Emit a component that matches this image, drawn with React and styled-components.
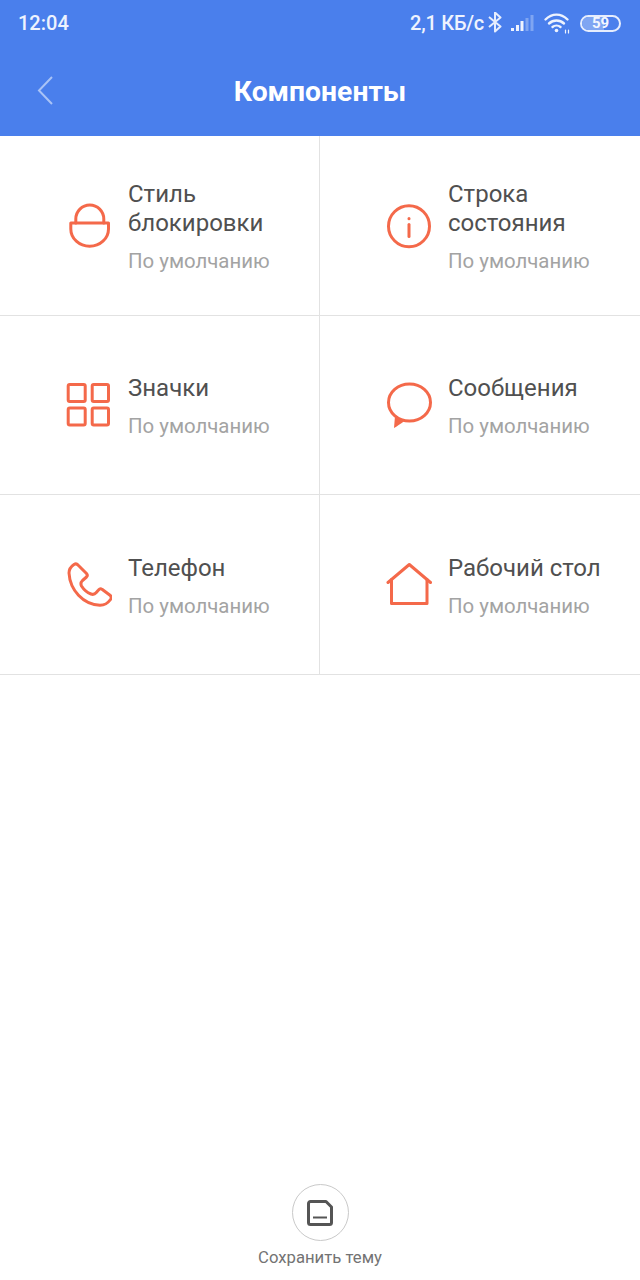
import React from "react";
import styled, { createGlobalStyle } from "styled-components";

const GlobalStyle = createGlobalStyle`
  html, body {
    margin: 0;
    padding: 0;
    background: #fff;
    font-family: Roboto, "Liberation Sans", sans-serif;
  }
`;

const Page = styled.div`
  width: 640px;
  height: 1280px;
  display: flex;
  flex-direction: column;
  overflow: hidden;
  background: #fff;
`;

const Header = styled.header`
  background: #4a7fec;
  height: 136px;
  display: flex;
  flex-direction: column;
  color: #fff;
`;

const StatusBar = styled.div`
  height: 46px;
  display: flex;
  align-items: center;
  justify-content: space-between;
  padding: 0 19px 0 18px;
  font-size: 20px;
  font-weight: 500;
  color: #eef3fe;
`;

const StatusRight = styled.div`
  display: flex;
  align-items: center;
`;

const Speed = styled.span`
  margin-right: 4px;
  letter-spacing: -0.25px;
`;

const StatusIcon = styled.svg`
  display: block;
  margin-left: ${({ $gap }) => $gap || 0}px;
`;

const Battery = styled.div`
  position: relative;
  width: 41px;
  height: 17px;
  margin-left: 9px;
  box-sizing: border-box;
  border: 2px solid #e6edfd;
  border-radius: 9px;
  display: flex;
  align-items: center;
  justify-content: center;
  overflow: hidden;
  font-size: 15px;
  line-height: 13px;
  font-weight: 700;
  color: #f2f6ff;
`;

const BatteryFill = styled.div`
  position: absolute;
  left: 0;
  top: 0;
  bottom: 0;
  background: #7fa5f2;
`;

const BatteryLabel = styled.span`
  position: relative;
`;

const NavBar = styled.div`
  flex: 1;
  position: relative;
  display: flex;
  align-items: center;
  justify-content: center;
`;

const BackButton = styled.div`
  position: absolute;
  left: 36px;
  top: 29px;
  line-height: 0;
`;

const Title = styled.h1`
  margin: 2px 0 0;
  font-size: 28.3px;
  font-weight: 700;
  line-height: 32px;
`;

const Grid = styled.div`
  display: grid;
  grid-template-columns: 320px 320px;
  grid-template-rows: 180px 179px 180px;
`;

const Cell = styled.div`
  box-sizing: border-box;
  display: flex;
  align-items: center;
  gap: 16px;
  padding-left: 64px;
  border-bottom: 1px solid #e2e2e2;
  border-right: ${({ $divider }) => ($divider ? "1px solid #e2e2e2" : "none")};
`;

const IconBox = styled.div`
  width: 48px;
  height: 48px;
  flex: none;
  line-height: 0;
`;

const CellText = styled.div`
  display: flex;
  flex-direction: column;
  margin-top: 5px;
`;

const CellTitle = styled.div`
  font-size: 24px;
  line-height: 29px;
  color: #505050;
  white-space: pre-line;
`;

const CellSub = styled.div`
  margin-top: 9px;
  font-size: 20.4px;
  line-height: 29px;
  color: #a3a3a3;
`;

const Footer = styled.footer`
  margin-top: auto;
  padding-bottom: 11px;
  display: flex;
  flex-direction: column;
  align-items: center;
`;

const SaveCircle = styled.div`
  width: 57px;
  height: 57px;
  box-sizing: border-box;
  border: 1px solid #c9c9c9;
  border-radius: 50%;
  display: flex;
  align-items: center;
  justify-content: center;
`;

const SaveLabel = styled.div`
  margin-top: 6px;
  font-size: 16.7px;
  line-height: 22px;
  color: #737373;
`;

const Line = styled.svg.attrs({
  width: 48,
  height: 48,
  viewBox: "0 0 48 48",
  fill: "none",
  stroke: "#f4694a",
  strokeWidth: 3,
  strokeLinecap: "round",
  strokeLinejoin: "round",
})``;

const LockIcon = () => (
  <Line>
    <path d="M11.800 21V17a14 14 0 0 1 28 0V21" />
    <path d="M6.800 21H44.500V27a18.850 17.300 0 0 1-37.700 0z" />
  </Line>
);

const InfoIcon = () => (
  <Line>
    <circle cx="25" cy="24.3" r="20.5" />
    <path d="M25 22.5v12" />
    <path d="M25 16.5v.3" />
  </Line>
);

const GridIcon = () => (
  <Line>
    <rect x="4.2" y="3.5" width="17" height="17" rx="1.5" />
    <rect x="28.2" y="3.5" width="16.3" height="17" rx="1.5" />
    <rect x="4.2" y="27" width="17" height="17" rx="1.5" />
    <rect x="28.2" y="27" width="16.3" height="17" rx="1.5" />
  </Line>
);

const BubbleIcon = () => (
  <Line>
    <ellipse cx="25.5" cy="21.5" rx="21" ry="18.5" />
    <path d="M11 35L10 47C13 45.500 16 43 20.500 40z" fill="#f4694a" stroke="none" />
  </Line>
);

const PhoneIcon = () => (
  <Line>
    <path d="M10 3.500C11.500 2.500 13 2.800 14 4L22.500 12.500C23.500 13.700 23.500 15 22.500 16L18.500 19.500C17 21 16.500 23 17.500 25C20 29 23 31.500 27 33C29 33.800 31 33 32.300 31.500L34.500 29C35.500 27.800 37 27.500 38 28.300L46 34.300C47.300 35.300 47.500 37 46.500 38.500C44 42 40.500 44.300 36 44.300C19 43.500 6 29 5 12C5 8.500 7 5.500 10 3.500Z" />
  </Line>
);

const HomeIcon = () => (
  <Line>
    <path d="M4 21.500L25.300 3.500 46.500 21.500" />
    <path d="M7.500 18.500V42.500H43V18.500" />
  </Line>
);

const SaveIcon = () => (
  <svg width="26" height="26" viewBox="0 0 26 26" fill="none" stroke="#555" strokeWidth="3" strokeLinejoin="round">
    <path d="M3.500 1.500H19L24.500 7V22.500a2 2 0 0 1-2 2h-19a2 2 0 0 1-2-2v-19a2 2 0 0 1 2-2z" />
    <path d="M6 17.500h14" strokeWidth="2" />
  </svg>
);

const BluetoothIcon = () => (
  <StatusIcon width="14" height="22" viewBox="0 0 14 22" fill="none" stroke="#e6edfd" strokeWidth="2" strokeLinejoin="round">
    <path d="M1 5l11.500 9.500L7 19.500V.5l5.500 5L1 15" />
  </StatusIcon>
);

const SignalIcon = () => (
  <StatusIcon $gap={8} width="26" height="18" viewBox="0 0 26 18">
    <rect x="1" y="14" width="3" height="3" fill="#eef3fe" />
    <rect x="6" y="11" width="3" height="6" fill="#eef3fe" />
    <rect x="10.500" y="7" width="3" height="10" fill="#eef3fe" />
    <rect x="15.500" y="4" width="3" height="13" fill="#7fa5f2" />
    <rect x="20.500" y="1" width="3" height="16" fill="#7fa5f2" />
  </StatusIcon>
);

const WifiIcon = () => (
  <StatusIcon $gap={7} width="28" height="22" viewBox="0 0 28 22" fill="none" stroke="#eef3fe" strokeWidth="2.400" strokeLinecap="round">
    <path d="M2.500 7.500C9 1 18 1 24.500 7.500" />
    <path d="M6 11.500c4.300-4 10.700-4 15 0" />
    <path d="M9.500 15c2.200-1.800 5.800-1.800 8 0" />
    <circle cx="13.500" cy="18.500" r="1.800" fill="#eef3fe" stroke="none" />
    <path d="M22.500 18v3M25.500 18v3" strokeWidth="1.200" />
  </StatusIcon>
);

const items = [
  { title: "Стиль\nблокировки", Icon: LockIcon },
  { title: "Строка\nсостояния", Icon: InfoIcon },
  { title: "Значки", Icon: GridIcon },
  { title: "Сообщения", Icon: BubbleIcon },
  { title: "Телефон", Icon: PhoneIcon },
  { title: "Рабочий стол", Icon: HomeIcon },
];

export default function App() {
  return (
    <Page>
      <GlobalStyle />
      <Header>
        <StatusBar>
          <span>12:04</span>
          <StatusRight>
            <Speed>2,1 КБ/с</Speed>
            <BluetoothIcon />
            <SignalIcon />
            <WifiIcon />
            <Battery>
              <BatteryFill style={{ width: "59%" }} />
              <BatteryLabel>59</BatteryLabel>
            </Battery>
          </StatusRight>
        </StatusBar>
        <NavBar>
          <BackButton>
            <svg width="18" height="30" viewBox="0 0 18 30" fill="none" stroke="#a9c3f6" strokeWidth="2">
              <path d="M16 2L3 15.500 16 29" />
            </svg>
          </BackButton>
          <Title>Компоненты</Title>
        </NavBar>
      </Header>
      <Grid>
        {items.map(({ title, Icon }, i) => (
          <Cell key={title} $divider={i % 2 === 0}>
            <IconBox>
              <Icon />
            </IconBox>
            <CellText>
              <CellTitle>{title}</CellTitle>
              <CellSub>По умолчанию</CellSub>
            </CellText>
          </Cell>
        ))}
      </Grid>
      <Footer>
        <SaveCircle>
          <SaveIcon />
        </SaveCircle>
        <SaveLabel>Сохранить тему</SaveLabel>
      </Footer>
    </Page>
  );
}
